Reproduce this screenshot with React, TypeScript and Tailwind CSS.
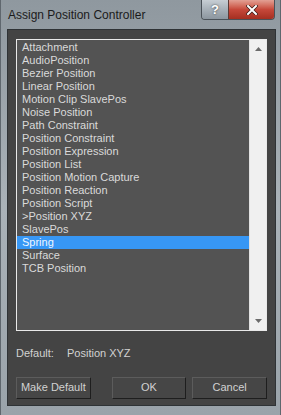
import type { ReactNode } from "react";

const items = [
  "Attachment",
  "AudioPosition",
  "Bezier Position",
  "Linear Position",
  "Motion Clip SlavePos",
  "Noise Position",
  "Path Constraint",
  "Position Constraint",
  "Position Expression",
  "Position List",
  "Position Motion Capture",
  "Position Reaction",
  "Position Script",
  ">Position XYZ",
  "SlavePos",
  "Spring",
  "Surface",
  "TCB Position",
];

const selected = "Spring";

export default function App() {
  return (
    <div
      className="flex h-[415px] w-[281px] flex-col overflow-hidden border-x border-[#5f676e] bg-gradient-to-b from-[#8f989f] via-[#aab2b8] to-[#9aa3aa] pl-[6px] pr-[4px] pb-[9px]"
      style={{ fontFamily: '"Liberation Sans", Arial, sans-serif' }}
    >
      <TitleBar />
      <div className="flex min-h-0 flex-1 flex-col bg-[#444444] px-[9px] pt-[10px] pb-[8px] shadow-[inset_0_0_0_1px_#2f3336]">
        <ListBox />
        <div className="mt-[14px] flex items-center text-[11px] text-[#d2d2d2]">
          <span className="w-[51px]">Default:</span>
          <span>Position XYZ</span>
        </div>
        <div className="mt-[15px] flex">
          <DialogButton className="w-[75px]">Make Default</DialogButton>
          <DialogButton className="ml-[21px] w-[75px]">OK</DialogButton>
          <DialogButton className="ml-[6px] w-[75px]">Cancel</DialogButton>
        </div>
      </div>
    </div>
  );
}

function TitleBar() {
  return (
    <div className="flex h-[29px] shrink-0 items-start">
      <div className="mt-[8px] ml-[1px] flex-1 text-[12px] leading-[14px] text-[#1b1b1b]">
        Assign Position Controller
      </div>
      <div className="mr-[1px] flex h-[20px] overflow-hidden rounded-b-[4px] border border-t-0 border-[#4a5158]">
        <div className="flex w-[26px] items-center justify-center bg-gradient-to-b from-[#c7ced4] via-[#a7b0b8] to-[#8c969f] text-[13px] font-bold text-white [text-shadow:0_0_2px_#333]">
          ?
        </div>
        <div className="flex w-[46px] items-center justify-center border-l border-[#5b3a36] bg-gradient-to-b from-[#e2a094] via-[#c6483a] to-[#a52f20]">
          <svg width="12" height="10" viewBox="0 0 12 10">
            <path d="M2 1 L10 9 M10 1 L2 9" stroke="#3a1a14" strokeWidth="3.4" strokeLinecap="square" />
            <path d="M2 1 L10 9 M10 1 L2 9" stroke="#ffffff" strokeWidth="2" strokeLinecap="square" />
          </svg>
        </div>
      </div>
    </div>
  );
}

function ListBox() {
  return (
    <div className="flex h-[292px] w-[251px] shrink-0 border border-[#e9e9e9] bg-[#535353]">
      <div className="flex-1 pt-[1px]">
        {items.map((item) => (
          <div
            key={item}
            className={
              item === selected
                ? "h-[13px] bg-[#3797f5] pl-[5px] text-[11px] leading-[13px] text-[#eef6ff]"
                : "h-[13px] pl-[5px] text-[11px] leading-[13px] text-[#dadada]"
            }
          >
            {item}
          </div>
        ))}
      </div>
      <div className="flex w-[17px] flex-col items-center justify-between border-l border-[#e2e2e2] bg-[#f0f0f0] py-[7px]">
        <svg width="7" height="4" viewBox="0 0 7 4">
          <path d="M0 4 L3.5 0 L7 4 Z" fill="#6b6b6b" />
        </svg>
        <svg width="7" height="4" viewBox="0 0 7 4">
          <path d="M0 0 L3.5 4 L7 0 Z" fill="#6b6b6b" />
        </svg>
      </div>
    </div>
  );
}

function DialogButton({ children, className }: { children: ReactNode; className?: string }) {
  return (
    <div
      className={
        "flex h-[22px] items-center justify-center border border-t-[#5c5c5c] border-l-[#5c5c5c] border-b-[#1e1e1e] border-r-[#1e1e1e] bg-[#464646] text-[11px] text-[#d2d2d2] " +
        (className ?? "")
      }
    >
      {children}
    </div>
  );
}
